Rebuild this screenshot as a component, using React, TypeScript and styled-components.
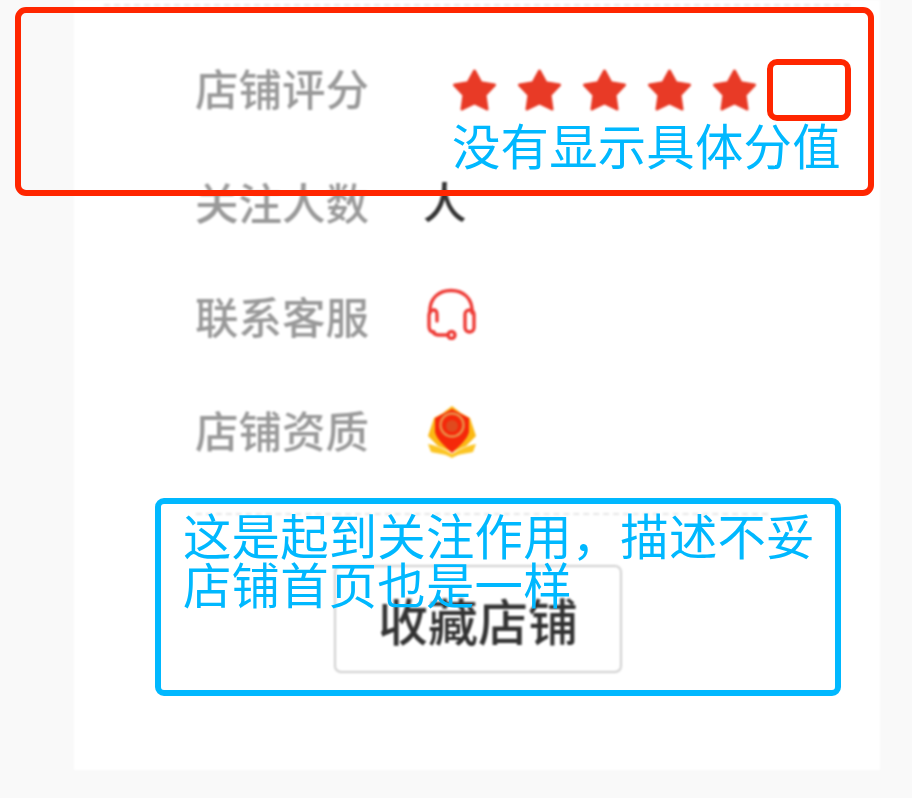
import styled, { createGlobalStyle } from 'styled-components';

const GlobalStyle = createGlobalStyle`
  html, body {
    margin: 0;
    padding: 0;
    background: #f9f9f9;
    font-family: "Liberation Sans", "Noto Sans CJK SC", sans-serif;
  }
`;

const Page = styled.div`
  position: relative;
  width: 912px;
  height: 798px;
  overflow: hidden;
  padding-left: 74px;
  box-sizing: border-box;
`;

const ShopCard = styled.div`
  width: 806px;
  height: 770px;
  background: #fff;
  padding-top: 4px;
  box-sizing: border-box;
  filter: blur(0.9px);
`;

const Divider = styled.div<{ $left: number; $right: number }>`
  margin: 0 ${props => props.$right}px 0 ${props => props.$left}px;
  border-top: 2px dashed #e6e6e6;
`;

const InfoList = styled.div`
  padding: 28px 0 23px 121px;
`;

const InfoRow = styled.div`
  display: flex;
  align-items: center;
  height: 114px;
`;

const Label = styled.div`
  width: 228px;
  padding-top: 2px;
  font-size: 43.5px;
  font-weight: 500;
  line-height: 1;
  color: #999;
`;

const Value = styled.div`
  font-size: 43.5px;
  font-weight: 500;
  line-height: 1;
  color: #333;
`;

const Stars = styled.div`
  display: flex;
  gap: 20px;
  margin-left: 29px;
  margin-bottom: 2px;
`;

const IconSlot = styled.div<{ $lift: number }>`
  display: flex;
  margin-left: 3px;
  margin-bottom: ${props => props.$lift}px;
`;

const ButtonRow = styled.div`
  display: flex;
  justify-content: center;
  padding: 50px 0 0 2px;
`;

const FollowButton = styled.button`
  width: 288px;
  height: 108px;
  background: #fff;
  border: 2px solid #cfcfcf;
  border-radius: 7px;
  font-family: inherit;
  font-size: 50px;
  font-weight: 500;
  color: #333;
  padding: 0;
`;

const NoteBox = styled.div<{ $x: number; $y: number; $w: number; $h: number; $color: string; $radius: number }>`
  position: absolute;
  left: ${props => props.$x}px;
  top: ${props => props.$y}px;
  width: ${props => props.$w}px;
  height: ${props => props.$h}px;
  box-sizing: border-box;
  border: 6px solid ${props => props.$color};
  border-radius: ${props => props.$radius}px;
`;

const NoteText = styled.div<{ $x: number; $y: number }>`
  position: absolute;
  left: ${props => props.$x}px;
  top: ${props => props.$y}px;
  font-size: 48.4px;
  letter-spacing: 0.2px;
  line-height: 49px;
  color: #00b8ff;
  white-space: nowrap;
`;

function Star() {
  return (
    <svg width="45" height="42" viewBox="0 0 45 42">
      <path
        d="M22.5 2 L28.900 13.800 L42.500 16 L33 26 L35 40 L22.500 34 L10 40 L12 26 L2.500 16 L16.100 13.800 Z"
        fill="#e83a26"
        stroke="#e83a26"
        strokeWidth="3"
        strokeLinejoin="round"
      />
    </svg>
  );
}

function HeadsetIcon() {
  return (
    <svg width="50" height="52" viewBox="0 0 50 52" fill="none" stroke="#ee3b36" strokeWidth="3.400" strokeLinecap="round">
      <path d="M4 25 C3 10 13 2.500 25 2.500 C37 2.500 47 10 46 25" />
      <path d="M8 22 C4.500 22 3 24 3 27 V38 C3 42 5 44 8 44" />
      <path d="M8 22 C10 22 11 24 11 27 V33" />
      <rect x="39" y="22" width="9" height="22" rx="4.500" />
      <path d="M7 44 C8 46 10 47 13 47 H22" />
      <circle cx="25.500" cy="47" r="3.500" />
    </svg>
  );
}

function BadgeIcon() {
  return (
    <svg width="52" height="54" viewBox="0 0 52 54">
      <path d="M26 2 L35 9 L44 14 L50 32 L40 42 L26 48 L12 42 L2 32 L8 14 L17 9 Z" fill="#fbb813" />
      <path d="M2 40 C12 42 18 45 26 50 C34 45 40 42 50 40 L47 48 C38 50 32 50 26 54 C20 50 14 50 5 48 Z" fill="#fcc524" />
      <path d="M26 5 L43 14 L43 28 C41 36 33 42 26 49 C19 42 11 36 9 28 L9 14 Z" fill="#f5280a" />
      <circle cx="26" cy="21" r="11.500" fill="none" stroke="#ea8f48" strokeWidth="2.500" />
      <circle cx="26" cy="22" r="6" fill="#e04a1e" />
    </svg>
  );
}

export default function App() {
  return (
    <Page>
      <GlobalStyle />
      <ShopCard>
        <Divider $left={30} $right={30} />
        <InfoList>
          <InfoRow>
            <Label>店铺评分</Label>
            <Stars>
              <Star />
              <Star />
              <Star />
              <Star />
              <Star />
            </Stars>
          </InfoRow>
          <InfoRow>
            <Label>关注人数</Label>
            <Value>人</Value>
          </InfoRow>
          <InfoRow>
            <Label>联系客服</Label>
            <IconSlot $lift={10}>
              <HeadsetIcon />
            </IconSlot>
          </InfoRow>
          <InfoRow>
            <Label>店铺资质</Label>
            <IconSlot $lift={4}>
              <BadgeIcon />
            </IconSlot>
          </InfoRow>
        </InfoList>
        <Divider $left={122} $right={112} />
        <ButtonRow>
          <FollowButton>收藏店铺</FollowButton>
        </ButtonRow>
      </ShopCard>

      <NoteBox $x={15} $y={7} $w={859} $h={189} $color="#ff2600" $radius={11} />
      <NoteBox $x={767} $y={59} $w={84} $h={62} $color="#ff2600" $radius={10} />
      <NoteText $x={452} $y={124}>没有显示具体分值</NoteText>

      <NoteBox $x={155} $y={498} $w={686} $h={198} $color="#00b8ff" $radius={9} />
      <NoteText $x={183} $y={514}>
        这是起到关注作用，描述不妥
        <br />
        店铺首页也是一样
      </NoteText>
    </Page>
  );
}
